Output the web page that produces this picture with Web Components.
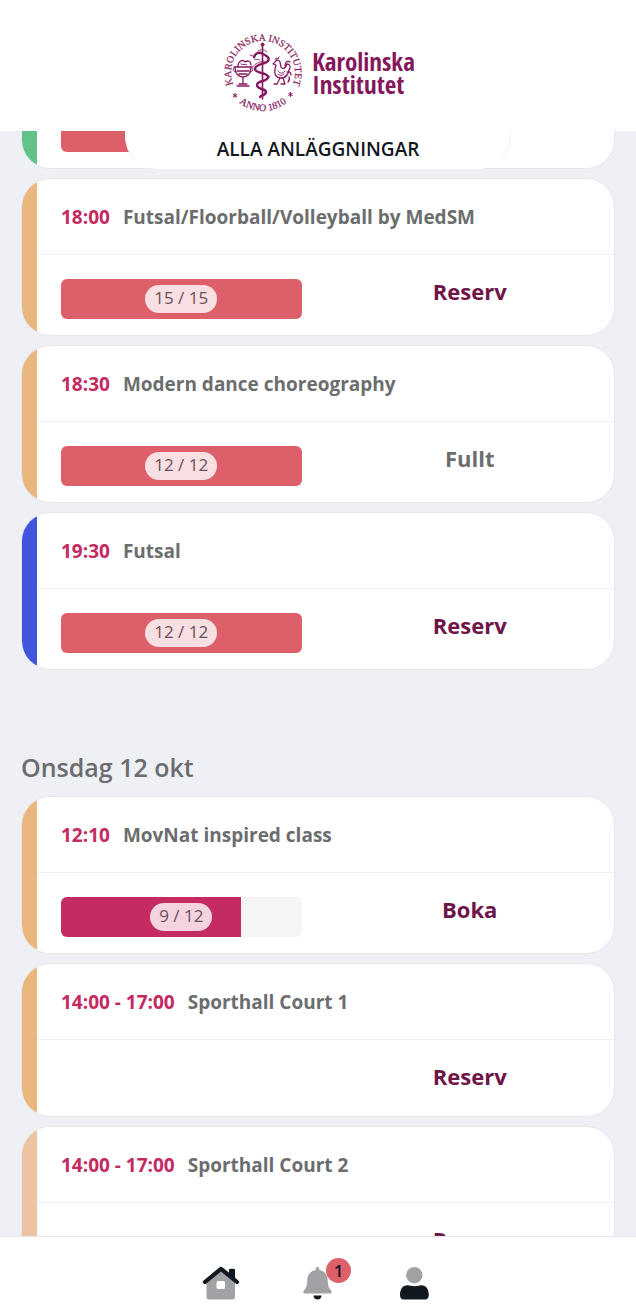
<!DOCTYPE html>
<html lang="sv">
<head>
<meta charset="utf-8">
<meta name="viewport" content="width=device-width, initial-scale=1">
<title>Karolinska Institutet – Bokning</title>
<style>
  html, body { margin: 0; height: 100%; }
  body { font-family: "Open Sans", "Noto Sans", sans-serif; color: #6b6d6e; background: #eff0f6; }
</style>
</head>
<body>
<booking-app>
  <ki-header slot="header"></ki-header>
  <facility-filter slot="filter">ALLA ANLÄGGNINGAR</facility-filter>
  <day-section>
    <class-card color="#61c389" booked="15" capacity="15" bar-only></class-card>
    <class-card color="#e9b67e" time="18:00" booked="15" capacity="15" action="Reserv">Futsal/Floorball/Volleyball by MedSM</class-card>
    <class-card color="#e9b67e" time="18:30" booked="12" capacity="12" action="Fullt" closed>Modern dance choreography</class-card>
    <class-card color="#4154dc" time="19:30" booked="12" capacity="12" action="Reserv">Futsal</class-card>
  </day-section>
  <day-section heading="Onsdag 12 okt">
    <class-card color="#e9b67e" time="12:10" booked="9" capacity="12" action="Boka">MovNat inspired class</class-card>
    <class-card color="#e9b67e" time="14:00 - 17:00" action="Reserv">Sporthall Court 1</class-card>
    <class-card color="#edc3a1" time="14:00 - 17:00" action="Reserv">Sporthall Court 2</class-card>
  </day-section>
  <tab-bar slot="footer" notices="1"></tab-bar>
</booking-app>

<script>
const define = (name, render) => customElements.define(name, class extends HTMLElement {
  connectedCallback() {
    if (this.shadowRoot) return;
    this.attachShadow({ mode: "open" }).innerHTML = render(this);
  }
});

define("booking-app", () => `
  <style>
    :host { display: flex; flex-direction: column; height: 100vh; }
    main { position: relative; flex: 1; min-height: 0; overflow: hidden; }
    .list { margin-top: -120px; padding: 0 21px; }
    .filter { position: absolute; top: 0; left: calc(20% - 2px); right: calc(20% - 2px); }
  </style>
  <slot name="header"></slot>
  <main>
    <div class="list"><slot></slot></div>
    <div class="filter"><slot name="filter"></slot></div>
  </main>
  <slot name="footer"></slot>`);

define("ki-header", () => `
  <style>
    :host { display: flex; justify-content: center; align-items: center; gap: 7px; height: 131px; padding-top: 15px; box-sizing: border-box; background: #fff; color: #85185c; }
    svg { width: 84px; height: 84px; display: block; overflow: visible; }
    svg text { font: 10px "Liberation Serif", serif; fill: currentColor; stroke: currentColor; stroke-width: .2px; text-anchor: middle; }
    .name { display: grid; font: 700 25px/23px "Open Sans Condensed", "Noto Sans Condensed", "Roboto Condensed", Roboto, sans-serif; }
  </style>
  <svg viewBox="0 0 84 84" fill="none" stroke="currentColor" stroke-linecap="round" stroke-linejoin="round" role="img" aria-label="Karolinska Institutets sigill">
    <defs>
      <path id="top" d="M19.400 64.600A32 32 0 1 1 64.600 64.600"/>
      <path id="low" d="M4 42A38 38 0 0 0 80 42"/>
    </defs>
    <text><textPath href="#top" startOffset="50%">KAROLINSKA INSTITUTET</textPath></text>
    <text><textPath href="#low" startOffset="50%">ANNO 1810</textPath></text>
    <path stroke-width="1" d="M14 62.500v4M12.200 63.500l3.600 2M15.800 63.500l-3.600 2M69.500 61.500v4M67.700 62.500l3.600 2M71.300 62.500l-3.600 2"/>
    <path stroke-width="1.600" d="M41.500 14v54"/>
    <circle cx="41.500" cy="13.500" r="1.500" fill="currentColor"/>
    <path stroke-width="2.400" d="M33 26c2-5 6-5 9-3 4 2 7 4 5 7s-13 3-13 8 13 3 13 8-11 3-11 8 9 3 9 7-6 3-6 5"/>
    <path stroke-width=".8" d="M32 25l-3-1M33 28l6 1M37 20c3-2 6-2 9 1M32 36c2-4 7-5 11-6M49 45c-2 5-8 4-12 7"/>
    <path stroke-width="1.300" d="M13 36h18M14 37c0 6 4 9 8 9s8-3 8-9M22 46v7M16 55h12M18 53h8M16 40h12M18 43h8M17 35c0-5 5-7 7-4 3-2 6-1 6 3"/>
    <path stroke-width="1" d="M20 33c2 2 4-1 6 1M13 37c-2 2 0 4 2 4M31 37c2 2 0 4-2 4"/>
    <path stroke-width="1.300" d="M54 31c2-3 4-2 5 0l1 5c2 3 5 1 6-3 3 0 4 3 2 6-1 5-4 8-8 8-5 0-7-4-6-9l1-4-3-1zM59 47l-3 6h-3M62 47l2 6h-4M64 35c0-4 3-6 5-4M66 41c3-1 4 1 4 3M68 46c1 2 0 4-1 5"/>
    <path stroke-width="1" d="M55 29v-2l2 1 1-2M57 40c2 3 5 3 7 0M57 43c2 2 4 2 6 0"/>
  </svg>
  <div class="name"><span>Karolinska</span><span>Institutet</span></div>`);

define("facility-filter", () => `
  <style>
    :host { display: block; }
    button { display: block; width: 100%; height: 38px; padding: 0; border: 1px solid #f2f2f6; border-top: 0; border-bottom-color: #fff; border-radius: 0 0 32px 32px; background: #fff; color: #121820; font: 600 19px/35px "Open Sans", "Noto Sans", sans-serif; }
  </style>
  <button type="button"><slot></slot></button>`);

define("day-section", el => `
  <style>
    :host { display: block; margin-bottom: 82px; }
    h2 { margin: 0 0 14px; font-size: 25px; line-height: 30px; font-weight: 600; }
    .cards { display: flex; flex-direction: column; gap: 9px; }
  </style>
  ${el.hasAttribute("heading") ? `<h2>${el.getAttribute("heading")}</h2>` : ""}
  <div class="cards"><slot></slot></div>`);

define("class-card", el => {
  const get = name => el.getAttribute(name);
  const barOnly = el.hasAttribute("bar-only");
  const booked = Number(get("booked")), capacity = Number(get("capacity"));
  const meter = capacity ? `
    <div class="meter"><div class="fill"></div>${barOnly ? "" : `<span>${booked} / ${capacity}</span>`}</div>` : "";
  return `
  <style>
    :host { display: flex; border: 1px solid #e5e7eb; border-radius: 29px; overflow: hidden; background: #fff; }
    .stripe { width: 15px; flex: none; background: ${get("color")}; }
    .content { flex: 1; min-width: 0; }
    header { display: flex; align-items: center; gap: 13px; height: 75px; padding: 0 24px; border-bottom: 1px solid #eff0f6; font-weight: 700; font-size: 19px; }
    time { color: #c42a62; }
    .row { display: grid; grid-template-columns: 1fr 1fr; align-items: start; height: ${capacity ? 80 : 76}px; }
    .meter { grid-column: 1; display: grid; place-items: center; height: 40px; margin: 24px 24px 0; border-radius: 6px; overflow: hidden; background: #f5f5f5; }
    .fill, span { grid-area: 1 / 1; }
    .fill { justify-self: start; height: 100%; width: ${booked / capacity * 100}%; background: ${booked < capacity ? "#c32b62" : "#dc5f69"}; }
    span { padding: 0 9px 2px; border-radius: 14px; background: #ffffffcc; color: #6b4e5b; font-size: 17px; line-height: 26px; }
    button { grid-column: 2; justify-self: center; margin: 20px 0 0; padding: 0; border: 0; background: none; color: #6e1548; font: 700 22px/32px "Open Sans", "Noto Sans", sans-serif; }
    button:disabled { color: #6b6d6e; }
  </style>
  <div class="stripe"></div>
  <div class="content">
    <header>${barOnly ? "" : `<time>${get("time")}</time><slot></slot>`}</header>
    <div class="row">${meter}${barOnly ? "" : `<button type="button"${el.hasAttribute("closed") ? " disabled" : ""}>${get("action")}</button>`}</div>
  </div>`;
});

define("tab-bar", el => `
  <style>
    :host { display: block; border-top: 1px solid #e5e7eb; background: #fff; }
    nav { display: flex; justify-content: center; gap: 56px; height: 73px; padding-top: 26px; box-sizing: border-box; }
    a { position: relative; display: block; width: 40px; height: 40px; }
    svg { display: block; width: 40px; height: 40px; }
    b { position: absolute; left: 28px; top: -5px; width: 25px; border-radius: 50%; background: #dc5f69; color: #121820; font-size: 17px; font-weight: 600; line-height: 25px; text-align: center; }
  </style>
  <nav>
    <a href="#home" aria-label="Hem"><svg viewBox="0 0 40 40">
      <path fill="#a1a2a6" fill-rule="evenodd" d="M19 7 33 19V34a2.500 2.500 0 0 1-2.500 2.500H7A2.500 2.500 0 0 1 4.500 34V19zM16 18a1.500 1.500 0 0 0-1.500 1.500v5a1.500 1.500 0 0 0 1.500 1.500h5.500a1.500 1.500 0 0 0 1.500-1.500v-5a1.500 1.500 0 0 0-1.500-1.500z"/>
      <path fill="#121820" d="M27 12V7a1.200 1.200 0 0 1 1.200-1.200h3.600A1.200 1.200 0 0 1 33 7v10.500z"/>
      <path fill="none" stroke="#121820" stroke-width="4.200" stroke-linecap="round" stroke-linejoin="round" d="M3 19 19 5.800 35 19"/>
    </svg></a>
    <a href="#notices" aria-label="Notiser"><svg viewBox="0 0 40 40">
      <path fill="#a1a2a6" d="M19.500 4c1.100 0 1.800.8 1.800 1.800V7c5.200 1 8.400 4.800 8.400 10 0 5.500 1.200 8 3.300 10.300 1.400 1.600.6 3.200-1.200 3.200H7.200c-1.800 0-2.600-1.600-1.200-3.200C8.100 25 9.300 22.500 9.300 17c0-5.200 3.200-9 8.400-10V5.800c0-1 .7-1.800 1.800-1.800z"/>
      <path fill="#121820" d="M15.500 32.500h8c0 2.500-1.800 4-4 4s-4-1.500-4-4z"/>
    </svg><b>${el.getAttribute("notices")}</b></a>
    <a href="#profile" aria-label="Profil"><svg viewBox="0 0 40 40">
      <circle cx="20.300" cy="12.200" r="8.200" fill="#a1a2a6"/>
      <path fill="#121820" d="M13.500 22.300c2 0 4 1 6.900 1s4.900-1 6.900-1c5 0 7.500 4 7.500 10 0 2.700-1.400 4.200-3.500 4.200H9.500c-2.100 0-3.500-1.500-3.500-4.200 0-6 2.500-10 7.500-10z"/>
    </svg></a>
  </nav>`);
</script>
</body>
</html>
